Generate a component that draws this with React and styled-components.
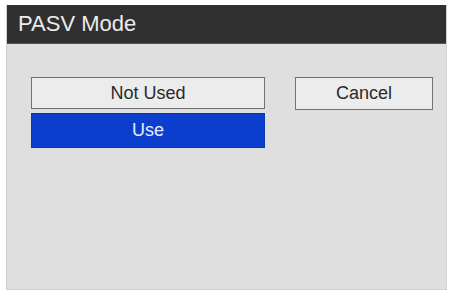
import React from "react";
import styled, { createGlobalStyle } from "styled-components";

const Global = createGlobalStyle`
  html, body {
    margin: 0;
    padding: 0;
    background: #ffffff;
  }
  body {
    font-family: "Liberation Sans", Arial, sans-serif;
  }
`;

const Screen = styled.div`
  padding: 5px 3px 5px 6px;
  height: 295px;
  box-sizing: border-box;
`;

const Dialog = styled.div`
  display: flex;
  flex-direction: column;
  height: 100%;
  background: #dfdfdf;
  border: 1px solid #cfcfcf;
  border-top: none;
  box-sizing: border-box;
`;

const TitleBar = styled.header`
  display: flex;
  align-items: center;
  height: 38px;
  padding: 0 11px;
  background: #303030;
  border-bottom: 1px solid #555;
  color: #ececec;
  font-size: 22px;
`;

const Body = styled.div`
  display: flex;
  align-items: flex-start;
  gap: 30px;
  padding: 33px 0 0 24px;
`;

const Column = styled.div`
  display: flex;
  flex-direction: column;
  gap: 4px;
  width: 234px;
`;

const Button = styled.button`
  display: flex;
  align-items: center;
  justify-content: center;
  width: ${(p) => p.$width || "100%"};
  height: ${(p) => p.$height || "32px"};
  padding: 0;
  box-sizing: border-box;
  font-family: "Liberation Sans", Arial, sans-serif;
  font-size: 18px;
  background: ${(p) => (p.$selected ? "#0b3ecc" : "#ececec")};
  color: ${(p) => (p.$selected ? "#e4ecff" : "#2a2a2a")};
  border: 1px solid ${(p) => (p.$selected ? "#0a36b0" : "#727272")};
  border-radius: 0;
`;

export default function App() {
  return (
    <>
      <Global />
      <Screen>
        <Dialog>
          <TitleBar>PASV Mode</TitleBar>
          <Body>
            <Column>
              <Button>Not Used</Button>
              <Button $selected $height="35px">
                Use
              </Button>
            </Column>
            <Button $width="138px" $height="33px">
              Cancel
            </Button>
          </Body>
        </Dialog>
      </Screen>
    </>
  );
}
